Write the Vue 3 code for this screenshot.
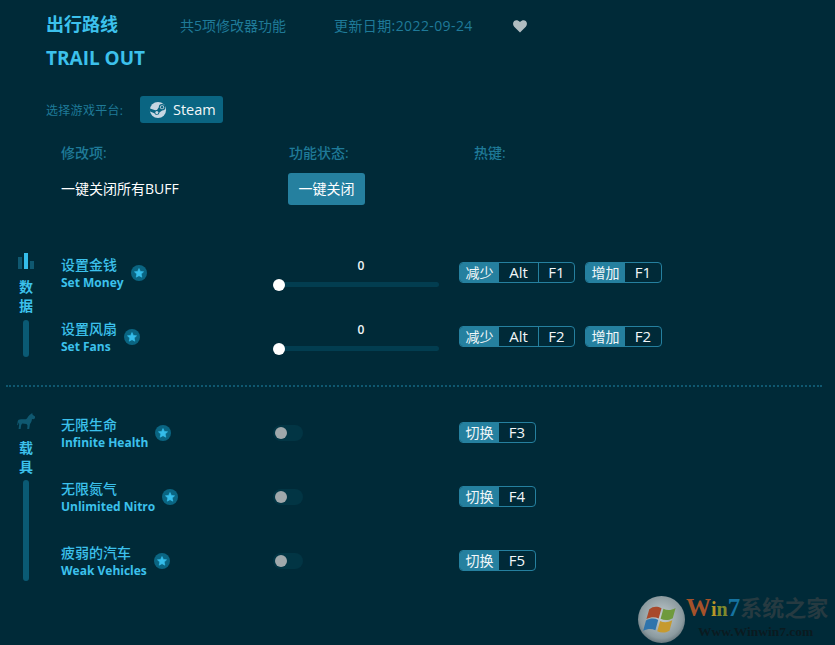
<script setup>
const dataRows = [
  { cn: '设置金钱', en: 'Set Money', f: 'F1' },
  { cn: '设置风扇', en: 'Set Fans', f: 'F2' }
]
const carRows = [
  { cn: '无限生命', en: 'Infinite Health', f: 'F3' },
  { cn: '无限氮气', en: 'Unlimited Nitro', f: 'F4' },
  { cn: '疲弱的汽车', en: 'Weak Vehicles', f: 'F5' }
]
const starPath = 'M8 .8l2.2 4.7 5.1.6-3.8 3.5 1 5.1L8 12.2l-4.5 2.5 1-5.1L.7 6.1l5.1-.6z'
</script>

<template>
  <div class="page">
    <header class="head">
      <div class="title-row">
        <h1 class="title">出行路线</h1>
        <span class="meta count">共5项修改器功能</span>
        <span class="meta date">更新日期:2022-09-24</span>
        <svg class="heart" viewBox="0 0 16 16" width="16" height="16">
          <path d="M8 14.6 2.2 8.7C.6 7 .7 4.5 2.2 3.1c1.5-1.3 3.9-1.1 5.8 1 1.9-2.1 4.3-2.3 5.8-1 1.5 1.4 1.6 3.9 0 5.6z" fill="#b0bcc0" />
        </svg>
      </div>
      <div class="title-en">TRAIL OUT</div>
      <div class="platform">
        <span class="platform-label">选择游戏平台:</span>
        <span class="steam">
          <svg viewBox="0 0 20 20" width="18" height="18">
            <circle cx="10" cy="10" r="9" fill="#c6d6e2" />
            <path d="M1.2 11.6 6 13.6a2.9 2.9 0 0 0 5.6-.9l3-2.2a3.6 3.6 0 1 0-3.7-3.6l-2 3a2.9 2.9 0 0 0-1.9.4L1 8.3z" fill="#0a6582" />
            <circle cx="14.5" cy="6.9" r="2.3" fill="#c6d6e2" />
            <circle cx="14.5" cy="6.9" r="1.3" fill="#0a6582" />
            <circle cx="8.7" cy="12.9" r="1.7" fill="#c6d6e2" />
          </svg>
          Steam
        </span>
      </div>
    </header>

    <div class="table-head">
      <span class="col-a">修改项:</span>
      <span class="col-b">功能状态:</span>
      <span>热键:</span>
    </div>
    <div class="close-row">
      <span class="close-text">一键关闭所有BUFF</span>
      <button class="close-btn">一键关闭</button>
    </div>

    <section class="section first">
      <div class="side">
        <svg class="side-icon" viewBox="0 0 16 16" width="16" height="16">
          <rect x="0" y="4" width="4" height="12" fill="#0f5870" />
          <rect x="6" y="0" width="4" height="16" fill="#35bdea" />
          <rect x="12" y="8" width="4" height="8" fill="#0f5870" />
        </svg>
        <div class="side-label">数<br />据</div>
        <div class="side-bar"></div>
      </div>
      <div class="rows">
        <div v-for="r in dataRows" :key="r.en" class="row">
          <div class="name">
            <div class="names">
              <div class="cn">{{ r.cn }}</div>
              <div class="en">{{ r.en }}</div>
            </div>
            <span class="star">
              <svg viewBox="0 0 16 16" width="10" height="10"><path :d="starPath" fill="#35bdea" stroke="#35bdea" stroke-linejoin="round" /></svg>
            </span>
          </div>
          <div class="control">
            <div class="slider">
              <div class="slider-value">0</div>
              <div class="track"><span class="thumb"></span></div>
            </div>
          </div>
          <div class="keys">
            <div class="key-group">
              <span class="key-label">减少</span>
              <span class="key k-alt">Alt</span>
              <span class="key k-f1">{{ r.f }}</span>
            </div>
            <div class="key-group">
              <span class="key-label">增加</span>
              <span class="key k-f">{{ r.f }}</span>
            </div>
          </div>
        </div>
      </div>
    </section>

    <div class="divider"></div>

    <section class="section second">
      <div class="side">
        <svg class="side-icon horse" viewBox="0 0 18 16" width="18" height="16">
          <path d="M18 3.5 15.6 1.8 15.2 0 13.6 1.2C12 2 11 3.5 10.3 5 9.8 6 9 6.2 7.5 6.2H4C2 6.2 1 7 .7 8.5L.2 12l.8.2.6-2.7.6 1.5-.6 5h2l.6-4 1-1.4 4.3.4 1 1.4-.3 3.6h2l.8-5c1.4-1.5 1.8-3.2 2-5l1.6.3 1.4-1.1z" fill="#0f5870" />
        </svg>
        <div class="side-label">载<br />具</div>
        <div class="side-bar long"></div>
      </div>
      <div class="rows">
        <div v-for="r in carRows" :key="r.en" class="row">
          <div class="name">
            <div class="names">
              <div class="cn">{{ r.cn }}</div>
              <div class="en">{{ r.en }}</div>
            </div>
            <span class="star">
              <svg viewBox="0 0 16 16" width="10" height="10"><path :d="starPath" fill="#35bdea" stroke="#35bdea" stroke-linejoin="round" /></svg>
            </span>
          </div>
          <div class="control">
            <div class="toggle"><span class="toggle-thumb"></span></div>
          </div>
          <div class="keys">
            <div class="key-group">
              <span class="key-label">切换</span>
              <span class="key k-f">{{ r.f }}</span>
            </div>
          </div>
        </div>
      </div>
    </section>

    <!-- watermark in the corner -->
    <div class="watermark">
      <svg class="globe" viewBox="0 0 50 50" width="49" height="47">
        <defs>
          <radialGradient id="ball" cx="0.5" cy="0.45" r="0.6">
            <stop offset="0" stop-color="#c5ced1" />
            <stop offset="0.75" stop-color="#8b9a9f" />
            <stop offset="1" stop-color="#56666c" />
          </radialGradient>
        </defs>
        <circle cx="25" cy="25" r="25" fill="url(#ball)" />
        <path d="M12 14c4-3 8-3.5 13-1l-3 11c-4-2-8-2-13 .5z" fill="#a8492b" />
        <path d="M27 13.5c4 2 8 2 13-.8l-3 11c-4.5 2.5-9 2.5-13 .6z" fill="#6f9a3c" />
        <path d="M8.5 26c5-2.5 9-2.5 13-.5l-3 11c-4-2-8-2-13 .5z" fill="#2f74ac" />
        <path d="M23.5 26.5c4 2 8.5 1.8 13-.6l-3 11c-4.5 2.5-9 2.5-13 .6z" fill="#c69a2f" />
      </svg>
      <div class="wm-text">
        <div class="wm-top"><span class="w1">W</span><span class="w2">i</span><span class="w3">n</span><span class="w4">7</span><span class="w5">系统之家</span></div>
        <div class="wm-url">Www.Winwin7.com</div>
      </div>
    </div>
  </div>
</template>

<style scoped>
.page {
  position: relative;
  width: 835px;
  height: 645px;
  overflow: hidden;
  background: #002a38;
  font-family: "Open Sans", "Noto Sans CJK SC", sans-serif;
  color: #fff;
}

.head {
  padding: 13px 0 0 46px;
}

.title-row {
  display: flex;
  align-items: center;
  height: 22px;
}

.title {
  width: 134px;
  margin: 0;
  font-size: 18px;
  font-weight: 700;
  line-height: 22px;
  color: #3cc1ec;
}

.meta {
  margin-top: 4px;
  font-size: 14px;
  line-height: 18px;
  color: #1f7a98;
}

.count {
  width: 154px;
}

.date {
  width: 178px;
  letter-spacing: 0.4px;
}

.heart {
  margin-top: 3px;
}

.title-en {
  margin-top: 11px;
  font-size: 19px;
  font-weight: 700;
  line-height: 24px;
  color: #3cc1ec;
}

.platform {
  display: flex;
  align-items: center;
  margin-top: 26px;
  height: 27px;
}

.platform-label {
  width: 94px;
  font-size: 12px;
  letter-spacing: 0.3px;
  color: #1f7a98;
}

.steam {
  display: flex;
  align-items: center;
  gap: 6px;
  height: 27px;
  width: 83px;
  padding-left: 9px;
  box-sizing: border-box;
  border-radius: 3px;
  background: #0a6582;
  font-size: 14.5px;
  color: #f2f7f9;
}

.table-head {
  display: flex;
  margin-top: 21px;
  padding-left: 61px;
  height: 18px;
  font-size: 14px;
  font-weight: 500;
  line-height: 18px;
  color: #1f7a98;
}

.col-a {
  width: 228px;
}

.col-b {
  width: 185px;
}

.close-row {
  display: flex;
  align-items: center;
  margin-top: 11px;
  padding-left: 61px;
  height: 32px;
}

.close-text {
  width: 227px;
  padding-bottom: 2px;
  font-size: 14px;
  color: #fff;
}

.close-btn {
  width: 77px;
  height: 32px;
  padding: 0 0 2px;
  border: 0;
  border-radius: 3px;
  background: #25809f;
  font-family: inherit;
  font-size: 14px;
  color: #fff;
}

.section {
  display: flex;
}

.first {
  margin-top: 45px;
  height: 135px;
}

.second {
  margin-top: 23px;
}

.side {
  display: flex;
  flex-direction: column;
  align-items: center;
  width: 52px;
  flex: none;
}

.side-icon {
  margin-top: 3px;
}

.side-icon.horse {
  margin-bottom: 1px;
}

.side-label {
  margin-top: 8px;
  font-size: 14px;
  font-weight: 700;
  line-height: 19px;
  text-align: center;
  color: #3cc1ec;
}

.side-bar {
  width: 6px;
  height: 37px;
  margin-top: 5px;
  border-radius: 3px;
  background: #0a5a74;
}

.side-bar.long {
  height: 101px;
  margin-top: 4px;
}

.rows {
  padding-left: 9px;
  padding-top: 5px;
}

.row {
  display: flex;
  align-items: center;
  height: 36px;
  margin-bottom: 28px;
}

.name {
  display: flex;
  align-items: center;
  gap: 7px;
  width: 212px;
  flex: none;
}

.cn {
  font-size: 14px;
  font-weight: 500;
  line-height: 18px;
  color: #3cc1ec;
}

.en {
  font-size: 12px;
  font-weight: 700;
  line-height: 17px;
  color: #3cc1ec;
  white-space: nowrap;
}

.star {
  display: flex;
  align-items: center;
  justify-content: center;
  width: 16px;
  height: 16px;
  border-radius: 50%;
  background: #0a6582;
}

.control {
  width: 186px;
  flex: none;
}

.slider {
  width: 166px;
  margin-top: -2px;
}

.slider-value {
  margin-left: 10px;
  font-size: 12px;
  font-weight: 600;
  line-height: 17px;
  text-align: center;
  color: #f2f7f9;
}

.track {
  position: relative;
  height: 5px;
  margin: 8px 0 0 6px;
  border-radius: 3px;
  background: #023d50;
}

.thumb {
  position: absolute;
  left: -6px;
  top: -3.5px;
  width: 12px;
  height: 12px;
  border-radius: 50%;
  background: #fff;
}

.toggle {
  position: relative;
  width: 30px;
  height: 16px;
  border-radius: 8px;
  background: #023544;
}

.toggle-thumb {
  position: absolute;
  left: 2px;
  top: 2px;
  width: 12px;
  height: 12px;
  border-radius: 50%;
  background: #a0a8ab;
}

.keys {
  display: flex;
  gap: 10px;
  margin-top: -1px;
}

.key-group {
  display: flex;
  height: 21px;
  box-sizing: border-box;
  border: 1px solid #25809f;
  border-radius: 4px;
  overflow: hidden;
  font-size: 15px;
  line-height: 19px;
}

.key-label {
  width: 39px;
  text-align: center;
  background: #25809f;
  font-size: 14px;
  color: #f2f7f9;
}

.key {
  text-align: center;
  color: #f2f7f9;
  font-weight: 500;
}

.k-alt {
  width: 40px;
  box-sizing: border-box;
  border-right: 1px solid #25809f;
}

.k-f1 {
  width: 35px;
}

.k-f {
  width: 36px;
}

.divider {
  margin-left: 6px;
  width: 816px;
  height: 0;
  border-top: 2px dotted #0f5870;
}

.watermark {
  position: absolute;
  left: 637px;
  top: 596px;
  display: flex;
}

.wm-text {
  font-family: "Liberation Serif", "Noto Sans CJK SC", serif;
  font-weight: 700;
}

.wm-top {
  font-size: 22px;
  line-height: 24px;
  white-space: nowrap;
}

.w1 {
  font-size: 25px;
  color: #a5522a;
}

.w2 {
  font-size: 20px;
  color: #b89528;
}

.w3 {
  font-size: 20px;
  color: #7f8a2c;
}

.w4 {
  font-size: 25px;
  color: #1673a0;
}

.w5 {
  color: #263a41;
}

.wm-url {
  margin: 4px 0 0 12px;
  font-size: 13.5px;
  line-height: 14px;
  white-space: nowrap;
  color: #0a1a20;
}
</style>
